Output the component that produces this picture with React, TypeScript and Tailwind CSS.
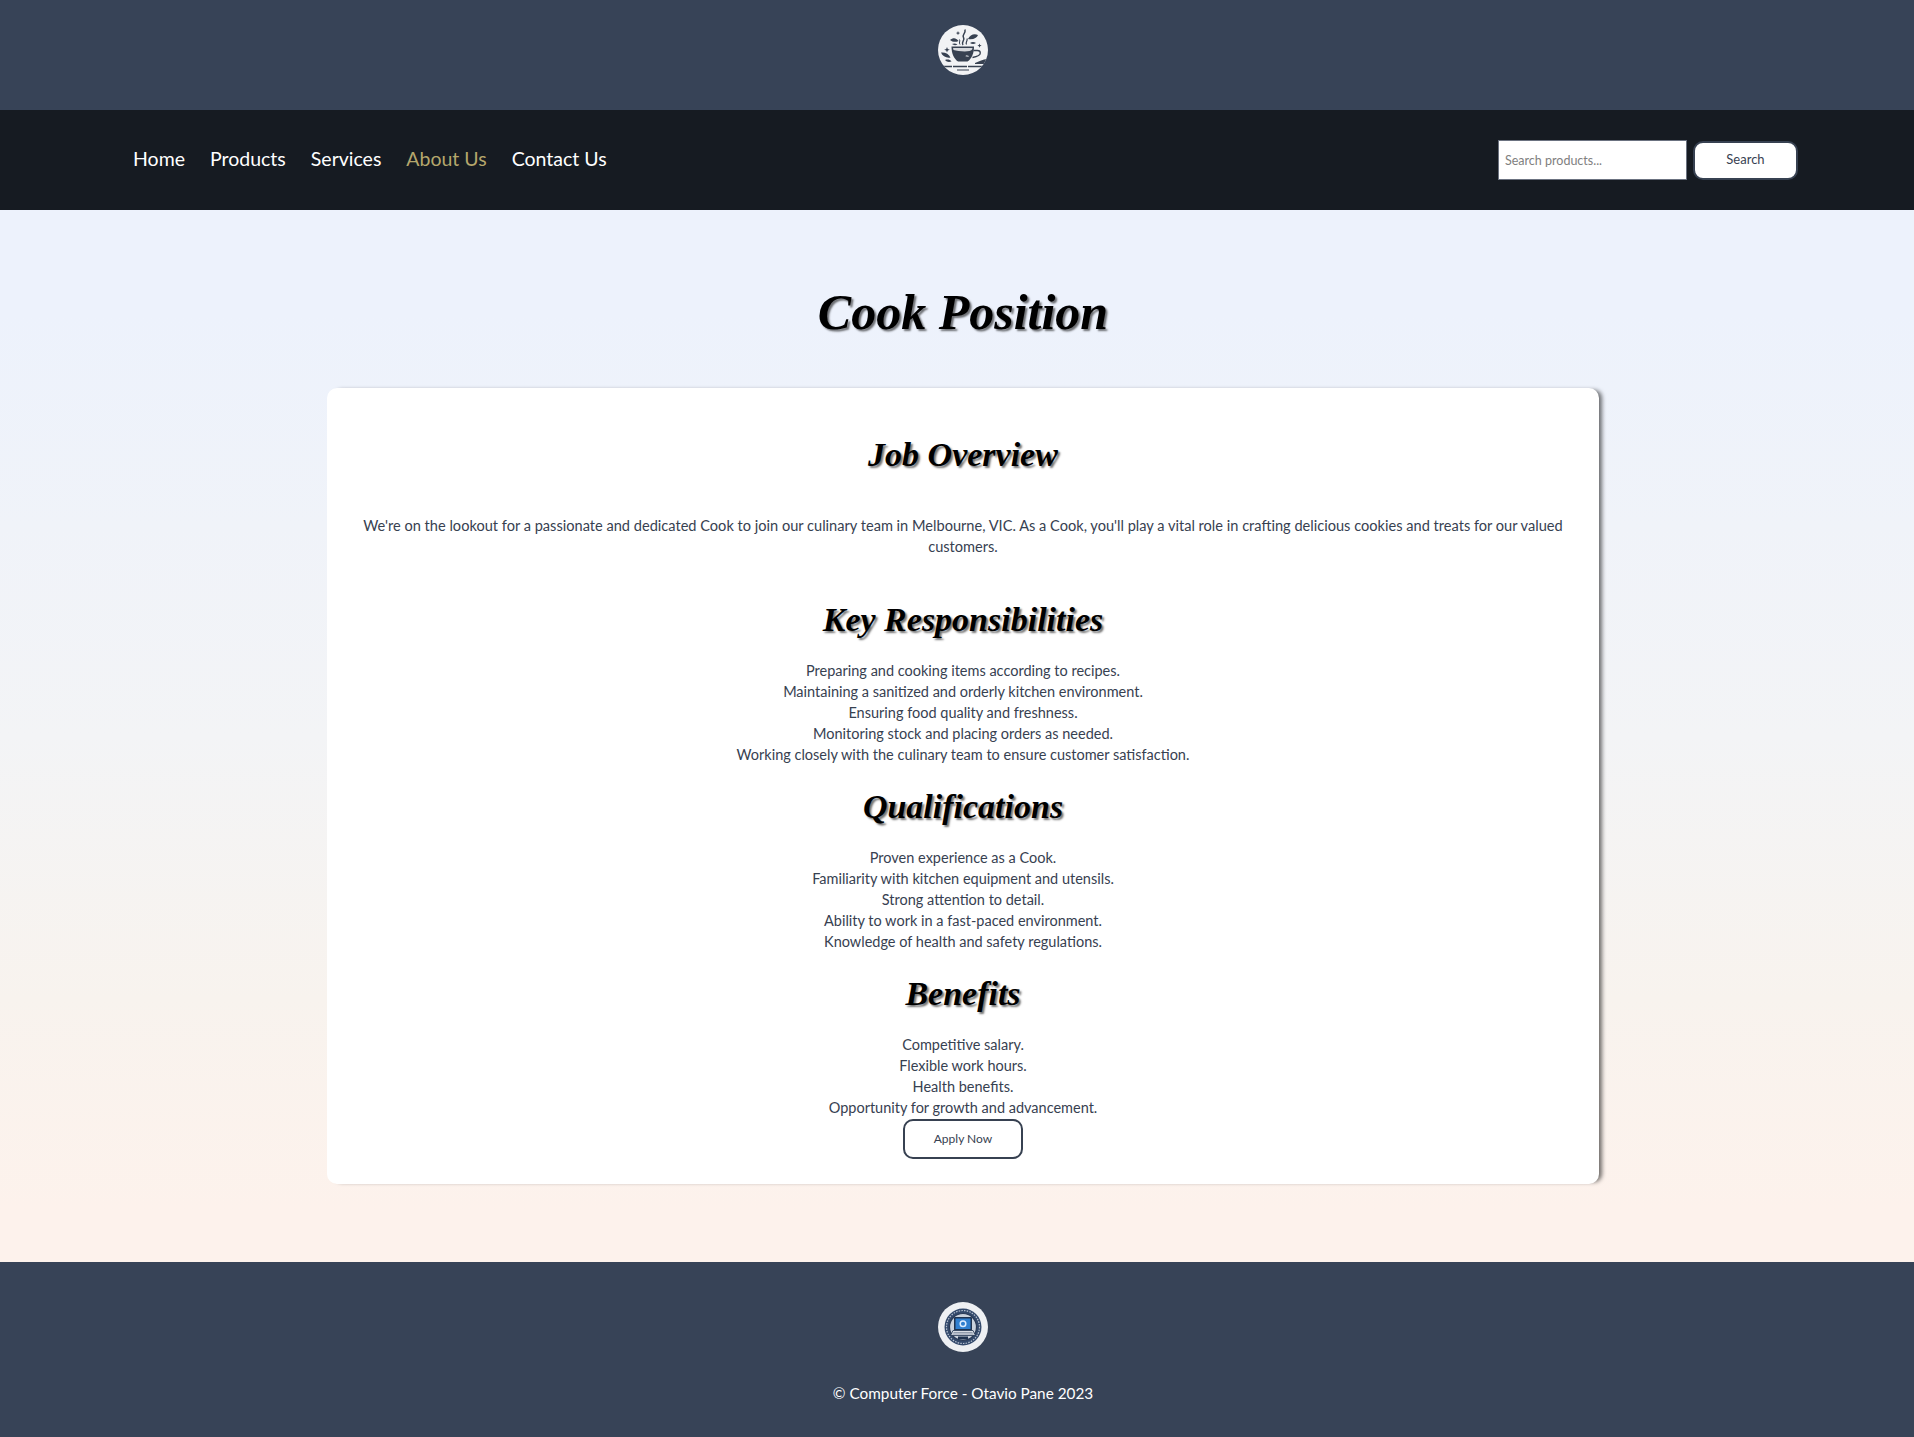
const body = "[font-family:Lato,'Liberation_Sans',sans-serif]";

function CupLogo() {
  return (
    <svg viewBox="0 0 50 50" className="w-[50px] h-[50px] block">
      <defs>
        <clipPath id="cupClip">
          <circle cx="25" cy="25" r="25" />
        </clipPath>
      </defs>
      <g clipPath="url(#cupClip)">
        <rect width="50" height="50" fill="#f2f3f5" />
        <path d="M13.5 21.5h22.5c0 7-2.5 12.5-6.5 15h-9.5c-4-2.5-6.5-8-6.5-15z" fill="#374151" />
        <path d="M15 23h19.5c-.3 2-1 2.5-3 3-5 1-12 0-16-1z" fill="#f2f3f5" opacity="0.85" />
        <path d="M35.5 25.5h4c2 0 2.8 1.200 2.800 2.500 0 2-2.500 3.500-7.800 4.500" fill="none" stroke="#374151" strokeWidth="1.300" />
        <path d="M28 30c1.500 0 3 1 3 1.500s-2 .5-3.500 0z" fill="#f2f3f5" opacity="0.6" />
        <path d="M25 20c-2.500-3 2.500-4.500 .5-7.500s2.500-3.500 1.500-8" fill="none" stroke="#374151" strokeWidth="1.500" />
        <path d="M28.500 19.500c-1.500-2 1.500-3.500 .5-6" fill="none" stroke="#374151" strokeWidth="1.200" />
        <path d="M22 19.500c-1.500-2 .5-3 -.5-5" fill="none" stroke="#374151" strokeWidth="1" />
        <path d="M12 15c3-2.500 6-2.500 8.500 1-3 1.500-6 1-8.500-1zM14 19c2-1 4-.5 5.500.5-2 1-4 .8-5.500-.5z" fill="#374151" />
        <path d="M30 14c2-4 6-6 10-4-1 3-5 5-10 4zM32 18c2-1.500 4-1.500 6 0-2 1.200-4 1.200-6 0z" fill="#374151" />
        <path d="M3 27.500c4-.5 8 1.500 9.500 5-4 .8-8-1-9.500-5z" fill="#374151" />
        <path d="M7 35c2.500-1 5-.5 6.500 1.500-2.500 1-5 .5-6.500-1.500z" fill="#374151" />
        <path d="M37 38c3-1 8-4 14-4v5H37z" fill="#374151" />
        <path d="M5 41.500h40" stroke="#374151" strokeWidth="1.300" strokeDasharray="9 1 14 1 15" />
        <path d="M19 45h12" stroke="#374151" strokeWidth="1" />
        <path d="M9 22l.8 2 2 .8-2 .8-.8 2-.8-2-2-.8 2-.8zM41.500 18.500l.6 1.500 1.500.6-1.500.6-.6 1.500-.6-1.500-1.500-.6 1.500-.6zM20 6l.6 1.500 1.500.6-1.500.6-.6 1.500-.6-1.500-1.500-.6 1.500-.6z" fill="#374151" />
      </g>
    </svg>
  );
}

function TechLogo() {
  return (
    <svg viewBox="0 0 50 50" className="w-[50px] h-[50px] block">
      <circle cx="25" cy="25" r="25" fill="#eef0f3" />
      <circle cx="25" cy="25" r="18.500" fill="#33496b" />
      <circle cx="25" cy="25" r="16.500" fill="none" stroke="#b9c3d2" strokeWidth="1.200" strokeDasharray="1.500 1.200" />
      <circle cx="25" cy="25" r="13.500" fill="#c9d1dc" />
      <circle cx="25" cy="25" r="13.500" fill="none" stroke="#2a3a55" strokeWidth="1.200" />
      <rect x="16" y="15" width="18" height="13.500" rx="1" fill="#1f3350" />
      <rect x="17.500" y="16.500" width="15" height="10.500" fill="#2f7fd0" />
      <circle cx="25" cy="21.700" r="2.800" fill="none" stroke="#dcecff" strokeWidth="1.500" />
      <path d="M15 28.500h20l2.500 5h-25z" fill="#d8dde5" stroke="#1f3350" strokeWidth="0.800" />
      <path d="M15.500 30.500h19M14.500 32h21" stroke="#4a5a74" strokeWidth="0.500" />
      <path d="M20 34.500h10v3H20z" fill="#1f3350" />
    </svg>
  );
}

function H2({ children, className = "" }: { children: React.ReactNode; className?: string }) {
  return (
    <h2 className={`font-['Liberation_Serif',cursive] italic font-bold text-[34px] leading-[42px] text-black [text-shadow:2px_2px_2px_rgba(0,0,0,0.55)] ${className}`}>
      {children}
    </h2>
  );
}

const resp = [
  "Preparing and cooking items according to recipes.",
  "Maintaining a sanitized and orderly kitchen environment.",
  "Ensuring food quality and freshness.",
  "Monitoring stock and placing orders as needed.",
  "Working closely with the culinary team to ensure customer satisfaction.",
];
const qual = [
  "Proven experience as a Cook.",
  "Familiarity with kitchen equipment and utensils.",
  "Strong attention to detail.",
  "Ability to work in a fast-paced environment.",
  "Knowledge of health and safety regulations.",
];
const ben = [
  "Competitive salary.",
  "Flexible work hours.",
  "Health benefits.",
  "Opportunity for growth and advancement.",
];

function List({ items }: { items: string[] }) {
  return (
    <ul className="text-[14.5px] leading-[21px] text-[#374151]">
      {items.map((t) => (
        <li key={t}>{t}</li>
      ))}
    </ul>
  );
}

export default function App() {
  return (
    <div className={`${body} min-h-[1437px] flex flex-col`}>
      <header className="h-[110px] bg-[#374357] flex items-center justify-center pb-[10px] pl-[12px]">
        <CupLogo />
      </header>
      <nav className="h-[100px] bg-[#161b22] flex items-center justify-between pl-[133px] pr-[116px]">
        <ul className="flex gap-[25px] text-[19.5px] text-white pb-[2px]">
          <li>Home</li>
          <li>Products</li>
          <li>Services</li>
          <li className="text-[#b5a76c]">About Us</li>
          <li>Contact Us</li>
        </ul>
        <div className="flex items-center gap-[6px]">
          <input
            placeholder="Search products..."
            className="w-[189px] h-[40px] bg-white border border-[#6b7280] px-[6px] text-[12.5px] placeholder:text-[#808080] outline-none"
          />
          <button className="w-[105px] h-[39px] bg-white border-2 border-[#374151] rounded-[10px] text-[13px] text-[#374151]">
            Search
          </button>
        </div>
      </nav>
      <main className="h-[1052px] bg-[linear-gradient(180deg,#edf2fc_0%,#edf2fc_10%,#f3f4f6_50%,#f8f3ee_75%,#fdf2ec_95%,#fdf2ec_100%)] flex flex-col items-center pt-[60px] pl-[12px]">
        <h1 className="font-['Liberation_Serif',cursive] italic font-bold text-[50px] leading-[84px] text-black [text-shadow:2px_2px_2px_rgba(0,0,0,0.55)]">
          Cook Position
        </h1>
        <section className="mt-[34px] w-[1272px] bg-white rounded-[10px] shadow-[5px_0_4px_-2px_rgba(0,0,0,0.55)] flex flex-col items-center text-center px-[35px] pt-[46px] pb-[25px]">
          <H2>Job Overview</H2>
          <p className="mt-[39px] text-[14.6px] leading-[21px] text-[#374151]">
            We're on the lookout for a passionate and dedicated Cook to join our culinary team in Melbourne, VIC. As a Cook, you'll play a vital role in crafting delicious cookies and treats for our valued customers.
          </p>
          <H2 className="mt-[42px] mb-[19px]">Key Responsibilities</H2>
          <List items={resp} />
          <H2 className="mt-[21px] mb-[19px]">Qualifications</H2>
          <List items={qual} />
          <H2 className="mt-[21px] mb-[19px]">Benefits</H2>
          <List items={ben} />
          <button className="w-[120px] h-[40px] mt-[1px] pb-[1px] bg-white border-2 border-[#374151] rounded-[10px] text-[12px] text-[#374151]">
            Apply Now
          </button>
        </section>
      </main>
      <footer className="h-[175px] bg-[#374357] flex flex-col items-center pt-[40px] pl-[12px]">
        <TechLogo />
        <p className="mt-[30px] text-[15.3px] text-white">© Computer Force - Otavio Pane 2023</p>
      </footer>
    </div>
  );
}
